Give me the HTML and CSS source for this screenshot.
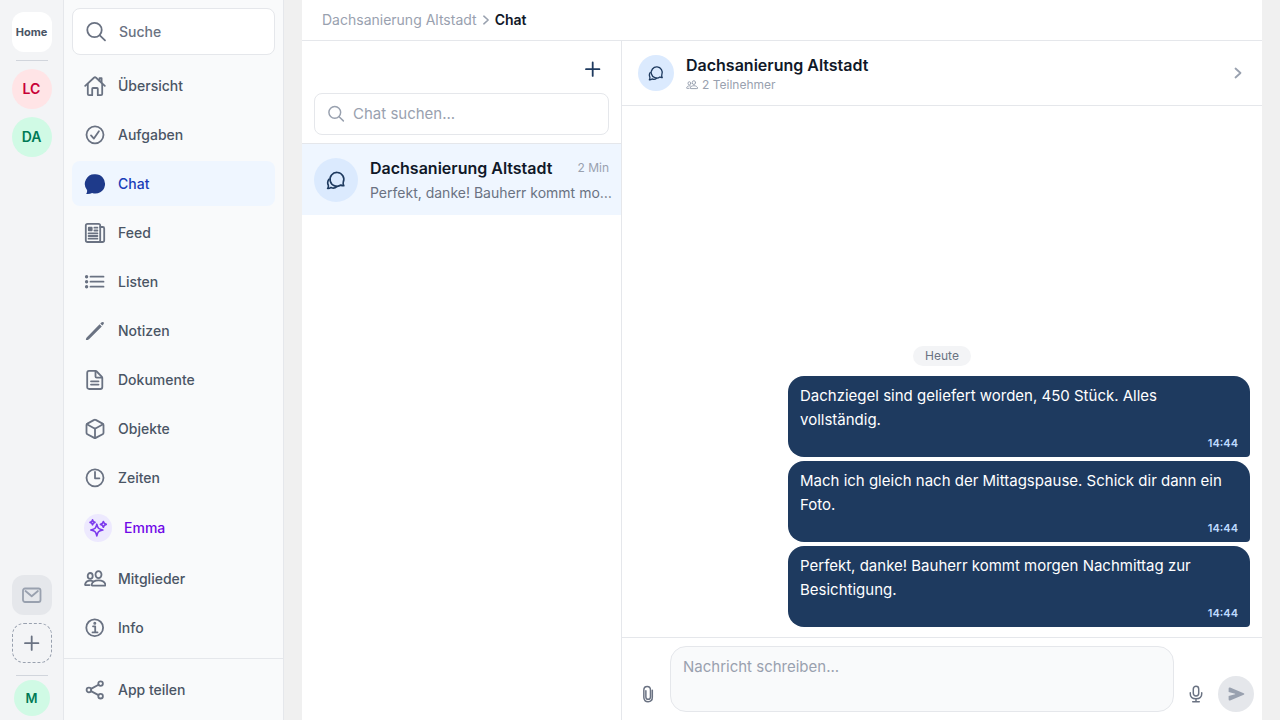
FILE: index.html
```html
<!DOCTYPE html>
<html lang="de">
<head>
<meta charset="utf-8">
<meta name="viewport" content="width=device-width, initial-scale=1">
<title>Dachsanierung Altstadt – Chat</title>
<link rel="stylesheet" href="styles.css">
</head>
<body>
<svg class="sprite" aria-hidden="true">
  <symbol id="i-search" viewBox="0 0 22 22"><circle cx="9.500" cy="9" r="7.200"/><path d="M14.800 14.300 20 19.400"/></symbol>
  <symbol id="i-bubbles" viewBox="0 0 22 22"><path d="M19.600 17.300c-1.200.2-2.300-.1-3.200-.8A7.600 7.600 0 1 1 19 13.300c-.4 1.400-.2 2.800.6 4Z"/><path d="M3.200 10.200c-1.500 2-1.700 4.300-.7 6.400.3 1.200.1 2.600-.7 3.700 1.400.1 2.700-.3 3.700-1.100 1.900.9 4.500.8 6.300-.9"/></symbol>
  <symbol id="i-people" viewBox="0 0 22 22"><ellipse cx="14.500" cy="6.600" rx="3" ry="3.500"/><path d="M8.300 17.600c-.6 0-.8-.4-.7-.9.500-2.600 3.300-4.400 6.900-4.400s6.400 1.800 6.900 4.400c.1.500-.1.900-.7.900Z"/><ellipse cx="6.200" cy="7.900" rx="2.500" ry="2.900"/><path d="M5.500 17.100H1.700c-.5 0-.7-.3-.6-.8.500-2.200 2.500-3.700 5.100-3.700 1 0 2 .2 2.800.6"/></symbol>
  <symbol id="i-plus" viewBox="0 0 22 22"><path d="M10.700 4.500v13.400M4 11.200h13.400"/></symbol>
  <symbol id="i-chevron" viewBox="0 0 10 14"><path d="m2.500 2.500 5 4.500-5 4.500"/></symbol>
</svg>
<div class="app">
  <nav class="rail" aria-label="Projekte">
    <button class="tile home">Home</button>
    <hr class="rail-line">
    <button class="tile round rose">LC</button>
    <button class="tile round mint">DA</button>
    <div class="rail-bottom">
      <button class="tile mail" aria-label="Einladungen"><svg class="icon" viewBox="0 0 22 22"><rect x="2" y="4.500" width="17.500" height="13.500" rx="2"/><path d="m4.500 7 6.200 5.300L16.900 7"/></svg></button>
      <button class="tile add" aria-label="Projekt hinzufügen"><svg class="icon"><use href="#i-plus"/></svg></button>
      <hr class="rail-line">
      <button class="tile round mint me">M</button>
    </div>
  </nav>

  <aside class="sidebar">
    <div class="menu">
      <button class="side-search"><svg class="icon"><use href="#i-search"/></svg>Suche</button>
      <nav class="links" aria-label="Bereiche">
        <a class="link" href="#"><svg class="icon" viewBox="0 0 22 22"><path d="M1.200 10.800 10.200 2.500c.5-.5 1.100-.5 1.600 0l9 8.300"/><path d="M3.800 9v10c0 .8.400 1.200 1.200 1.200h3.200v-6.400c0-.5.300-.8.800-.8h4c.5 0 .8.300.8.800v6.400H17c.8 0 1.200-.4 1.200-1.200V9"/><path d="M15.500 5.800V3.200h2.100v4.600"/></svg>Übersicht</a>
        <a class="link" href="#"><svg class="icon" viewBox="0 0 22 22"><circle cx="11" cy="10.800" r="8.500"/><path d="m7 11.400 2.900 3.200 5-7.300"/></svg>Aufgaben</a>
        <a class="link active" href="#" aria-current="page"><svg class="icon solid" viewBox="0 0 22 22"><path d="M11.200 1.300a9.600 9.600 0 1 1-3.100 18.600c-1.600.9-3.700 1.300-5.900 1 .8-1.100 1.200-2.500.8-4A9.600 9.600 0 0 1 11.200 1.300Z"/></svg>Chat</a>
        <a class="link" href="#"><svg class="icon" viewBox="0 0 22 22"><rect x="1.800" y="1.800" width="14.400" height="18.200" rx="1.800"/><path d="M16.200 5h2.500c1 0 1.500.5 1.500 1.500v11.700c0 1.200-.7 1.800-1.800 1.800H14.500M4.600 11.400h8.800M4.600 14h8.800M4.600 16.700h8.800M10.400 5.700h3M10.400 8.500h3"/><path class="filled" d="M4.800 5.700h2.900v2.600H4.800z"/></svg>Feed</a>
        <a class="link" href="#"><svg class="icon" viewBox="0 0 22 22"><path d="M6.500 5.700h13M6.500 10.700h13M6.500 15.700h13"/><g class="filled"><circle cx="2.600" cy="5.700" r=".8"/><circle cx="2.600" cy="10.700" r=".8"/><circle cx="2.600" cy="15.700" r=".8"/></g></svg>Listen</a>
        <a class="link" href="#"><svg class="icon solid" viewBox="0 0 22 22"><path d="M2 19.900c-.3-.4 0-1.400.7-2.400L15.600 4.300l2.200 2.200L5 19.200c-1.100.8-2.700 1.100-3 .7ZM16.300 3.600l1-1c.8-.8 1.600-.9 2.200-.3s.6 1.400-.2 2.200l-1 1Z"/></svg>Notizen</a>
        <a class="link" href="#"><svg class="icon" viewBox="0 0 22 22"><path d="M5 1.900h6.300c.6 0 1 .2 1.400.6l5 5.100c.4.400.6.900.6 1.500v8.900c0 1.300-.7 2-2 2H5.200c-1.300 0-2-.7-2-2V3.900c0-1.300.6-2 1.800-2Z"/><path d="M11.500 2v5.500c0 .8.400 1.200 1.200 1.200h5.500M7 12.300h7.500M7 15.600h7.500"/></svg>Dokumente</a>
        <a class="link" href="#"><svg class="icon" viewBox="0 0 22 22"><path d="M10.200 1.900c.5-.3 1-.3 1.500 0l6.900 3.700c.6.300.9.800.9 1.500v7.600c0 .7-.3 1.200-.9 1.500l-6.900 3.700c-.5.300-1 .3-1.500 0l-6.800-3.700c-.6-.3-.9-.8-.9-1.500V7.100c0-.7.300-1.200.9-1.500Z"/><path d="M2.900 6.300 11 10.700l8.100-4.400M11 10.700V20"/></svg>Objekte</a>
        <a class="link" href="#"><svg class="icon" viewBox="0 0 22 22"><circle cx="11" cy="10.800" r="8.500"/><path d="M11 4.900v6.400h4.400"/></svg>Zeiten</a>
        <a class="link emma" href="#"><span class="emma-badge"><svg class="icon" viewBox="0 0 22 22"><path d="M9.700 6.800c.9 4.500 1.900 5.400 6.600 6.400-4.700 1-5.700 2-6.600 6.500-.9-4.500-1.900-5.500-6.600-6.500 4.700-1 5.700-1.900 6.600-6.400Z"/><path d="M16.900 3.800c.4 2.200 1 2.700 3.200 3.200-2.200.5-2.800 1-3.200 3.200-.4-2.200-1-2.700-3.200-3.200 2.200-.5 2.800-1 3.200-3.200ZM5 2c.4 1.800.9 2.400 2.700 2.800C5.900 5.200 5.400 5.700 5 7.500 4.600 5.700 4.100 5.200 2.300 4.800 4.100 4.400 4.600 3.800 5 2Z"/></svg></span>Emma</a>
        <a class="link" href="#"><svg class="icon"><use href="#i-people"/></svg>Mitglieder</a>
        <a class="link" href="#"><svg class="icon" viewBox="0 0 22 22"><circle cx="10.700" cy="10.700" r="8.400"/><path d="M9 9.300h2.200v6M8.500 15.400h5"/><circle class="filled" cx="10.800" cy="6.300" r=".6"/></svg>Info</a>
      </nav>
    </div>
    <div class="share">
      <a class="link" href="#"><svg class="icon" viewBox="0 0 22 22"><circle cx="4.900" cy="11" r="2.300"/><circle cx="16.600" cy="4.600" r="2.300"/><circle cx="16.600" cy="17.200" r="2.300"/><path d="m7 9.900 7.500-4.100M7 12.100l7.500 4"/></svg>App teilen</a>
    </div>
  </aside>

  <main class="page">
    <nav class="crumbs" aria-label="Pfad"><a href="#">Dachsanierung Altstadt</a><svg class="icon crumb-sep"><use href="#i-chevron"/></svg><span class="crumb-here" aria-current="page">Chat</span></nav>
    <div class="columns">
      <section class="chats" aria-label="Chats">
        <div class="chats-head">
          <button class="new-chat" aria-label="Neuer Chat"><svg class="icon"><use href="#i-plus"/></svg></button>
          <label class="chat-search"><svg class="icon"><use href="#i-search"/></svg><input type="search" placeholder="Chat suchen..." aria-label="Chat suchen"></label>
        </div>
        <a class="chat-row" href="#">
          <span class="avatar large"><svg class="icon"><use href="#i-bubbles"/></svg></span>
          <span class="chat-text">
            <span class="chat-line"><span class="chat-name">Dachsanierung Altstadt</span><time class="chat-when">2 Min</time></span>
            <span class="chat-preview">Perfekt, danke! Bauherr kommt mo…</span>
          </span>
        </a>
      </section>

      <section class="thread" aria-label="Unterhaltung">
        <header class="thread-head">
          <span class="avatar"><svg class="icon"><use href="#i-bubbles"/></svg></span>
          <div class="thread-info">
            <h1 class="thread-title">Dachsanierung Altstadt</h1>
            <p class="members"><svg class="icon"><use href="#i-people"/></svg>2 Teilnehmer</p>
          </div>
          <button class="details" aria-label="Details"><svg class="icon"><use href="#i-chevron"/></svg></button>
        </header>
        <div class="messages">
          <span class="day">Heute</span>
          <article class="bubble"><p>Dachziegel sind geliefert worden, 450 Stück. Alles vollständig.</p><time>14:44</time></article>
          <article class="bubble"><p>Mach ich gleich nach der Mittagspause. Schick dir dann ein Foto.</p><time>14:44</time></article>
          <article class="bubble"><p>Perfekt, danke! Bauherr kommt morgen Nachmittag zur Besichtigung.</p><time>14:44</time></article>
        </div>
        <form class="composer">
          <button type="button" class="tool" aria-label="Datei anhängen"><svg class="icon" viewBox="0 0 22 22"><path d="M16.300 6.500v8.600c0 3.500-2.100 5.400-5.200 5.400s-5.200-1.900-5.200-5.400V6.200c0-2.700 1.600-4.500 4.100-4.500s4 1.700 4 4.400v8.500c0 1.800-1.100 2.900-2.800 2.900s-2.800-1.100-2.800-2.900V7"/></svg></button>
          <textarea rows="1" placeholder="Nachricht schreiben..." aria-label="Nachricht"></textarea>
          <button type="button" class="tool" aria-label="Sprachnachricht"><svg class="icon" viewBox="0 0 22 22"><rect x="7.700" y="1.500" width="6.600" height="12" rx="3.300"/><path d="M4 9.500v1.200c0 3.800 2.700 6.200 7 6.200s7-2.400 7-6.200V9.500M11 17v3.500M7 20.500h8"/></svg></button>
          <button type="button" class="tool send" aria-label="Senden"><svg class="icon solid" viewBox="0 0 22 22"><path d="M2 4.300c0-1 .8-1.500 1.800-1.100L20.400 10c1 .5 1 1.500 0 2L3.800 18.900c-1 .4-1.800-.1-1.800-1.100v-4.400l8-2v-.8L2 8.700Z"/></svg></button>
        </form>
      </section>
    </div>
  </main>
</div>
</body>
</html>
```
FILE: styles.css
```css
*, *::before, *::after { box-sizing: border-box; }

body {
  margin: 0;
  background: #f0f0f0;
  color: #101828;
  font-family: Inter, "Liberation Sans", sans-serif;
  font-size: 14px;
  line-height: 20px;
}

button, input, textarea { font: inherit; color: inherit; }
button { margin: 0; padding: 0; border: 0; background: none; cursor: pointer; }
a { color: inherit; text-decoration: none; }
h1, p { margin: 0; }

.sprite { position: absolute; width: 0; height: 0; }

.icon {
  flex: none;
  width: 22px;
  height: 22px;
  fill: none;
  stroke: currentColor;
  stroke-width: 1.8;
  stroke-linecap: round;
  stroke-linejoin: round;
}
.icon.solid, .icon .filled { fill: currentColor; }
.icon.solid { stroke: none; }

.app { display: flex; height: 100vh; }

/* Project rail */
.rail {
  flex: none;
  display: flex;
  flex-direction: column;
  align-items: center;
  gap: 8px;
  width: 64px;
  padding: 12px 0 4px;
  border-right: 1px solid #e5e7eb;
  background: #f3f4f6;
}
.rail-line { width: 32px; height: 1px; margin: 0; border: 0; background: #d1d5dc; }
.tile {
  display: flex;
  align-items: center;
  justify-content: center;
  width: 40px;
  height: 40px;
  border-radius: 12px;
  font-weight: 600;
}
.home { background: #fff; color: #4a5565; font-size: 11px; font-weight: 700; }
.round { border-radius: 50%; }
.rose { background: #ffe4e6; color: #c70036; }
.mint { background: #d0fae5; color: #007a55; }
.rail-bottom { display: flex; flex-direction: column; align-items: center; gap: 8px; margin-top: auto; }
.rail-bottom .rail-line { margin: 4px 0 -4px; }
.mail { background: #e5e7eb; color: #99a1af; }
.add { border: 1px dashed #99a1af; color: #6a7282; }
.me { width: 36px; height: 36px; font-size: 13px; }

/* Sidebar */
.sidebar {
  flex: none;
  display: flex;
  flex-direction: column;
  width: 220px;
  border-right: 1px solid #e5e7eb;
  background: #f9fafb;
}
.menu { flex: 1; min-height: 0; overflow: hidden; padding: 8px; }
.side-search {
  display: flex;
  align-items: center;
  gap: 12px;
  width: 100%;
  height: 47px;
  padding: 0 12px;
  border: 1px solid #e5e7eb;
  border-radius: 8px;
  background: #fff;
  color: #6a7282;
  font-weight: 500;
}
.links { display: flex; flex-direction: column; gap: 4px; margin-top: 8px; }
.link {
  display: flex;
  align-items: center;
  gap: 12px;
  min-height: 45px;
  padding: 0 12px;
  border-radius: 8px;
  color: #4a5565;
  font-weight: 500;
}
.link .icon { color: #6a7282; }
.link.active { background: #eff6ff; color: #193cb8; }
.link.active .icon { color: #1e3a8a; }
.link.emma { min-height: 48px; color: #7008e7; }
.emma-badge {
  display: flex;
  align-items: center;
  justify-content: center;
  width: 28px;
  height: 28px;
  border-radius: 50%;
  background: #ede9fe;
}
.emma-badge .icon { width: 20px; height: 20px; color: #7c3aed; }
.share { padding: 8px; border-top: 1px solid #e5e7eb; }

/* Page */
.page {
  flex: 1;
  display: flex;
  flex-direction: column;
  min-width: 0;
  max-width: 960px;
  margin: 0 auto;
  background: #fff;
}
.crumbs {
  display: flex;
  align-items: center;
  gap: 4px;
  padding: 10px 20px;
  border-bottom: 1px solid #e5e7eb;
  color: #99a1af;
}
.crumb-sep { width: 10px; height: 12px; }
.crumb-here { color: #101828; font-weight: 600; }
.columns { flex: 1; display: flex; min-height: 0; }

/* Chat list */
.chats { flex: none; width: 320px; border-right: 1px solid #e5e7eb; }
.chats-head {
  display: flex;
  flex-direction: column;
  gap: 8px;
  padding: 12px 12px 8px;
  border-bottom: 1px solid #e5e7eb;
}
.new-chat {
  display: flex;
  align-items: center;
  justify-content: center;
  align-self: flex-end;
  width: 32px;
  height: 32px;
  color: #1e3a5f;
}
.chat-search {
  display: flex;
  align-items: center;
  gap: 8px;
  height: 42px;
  padding: 0 12px;
  border: 1px solid #e5e7eb;
  border-radius: 8px;
  color: #99a1af;
}
.chat-search .icon { width: 18px; height: 18px; }
.chat-search input {
  flex: 1;
  min-width: 0;
  padding: 0;
  border: 0;
  outline: 0;
  background: none;
  color: #101828;
  font-size: 15px;
}
::placeholder { color: #99a1af; opacity: 1; }
.chat-row {
  display: flex;
  align-items: center;
  gap: 12px;
  padding: 12px;
  background: #eff6ff;
}
.avatar {
  flex: none;
  display: flex;
  align-items: center;
  justify-content: center;
  width: 36px;
  height: 36px;
  border-radius: 50%;
  background: #dbeafe;
  color: #1e3a5f;
}
.avatar .icon { width: 16px; height: 16px; }
.avatar.large { width: 44px; height: 44px; }
.avatar.large .icon { width: 20px; height: 20px; }
.chat-text { flex: 1; display: flex; flex-direction: column; gap: 3px; min-width: 0; }
.chat-line { display: flex; align-items: center; justify-content: space-between; gap: 8px; }
.chat-name { font-size: 16px; font-weight: 600; line-height: 24px; }
.chat-when { color: #99a1af; font-size: 12px; }
.chat-preview { color: #6a7282; white-space: nowrap; }

/* Conversation */
.thread { flex: 1; display: flex; flex-direction: column; min-width: 0; }
.thread-head {
  display: flex;
  align-items: center;
  gap: 12px;
  padding: 12px 16px;
  border-bottom: 1px solid #e5e7eb;
}
.thread-info { flex: 1; min-width: 0; }
.thread-title { font-size: 16px; font-weight: 600; line-height: 24px; }
.members { display: flex; align-items: center; gap: 4px; color: #99a1af; font-size: 12px; line-height: 16px; }
.members .icon { width: 12px; height: 12px; }
.details { display: flex; color: #99a1af; }
.details .icon { width: 16px; height: 14px; }
.messages {
  flex: 1;
  display: flex;
  flex-direction: column;
  align-items: flex-end;
  justify-content: flex-end;
  gap: 4px;
  min-height: 0;
  padding: 10px 12px;
}
.day {
  align-self: center;
  margin-bottom: 6px;
  padding: 2px 12px;
  border-radius: 10px;
  background: #f3f4f6;
  color: #6a7282;
  font-size: 12px;
  line-height: 16px;
}
.bubble {
  display: flex;
  flex-direction: column;
  width: 75%;
  padding: 8px 12px;
  border-radius: 16px 16px 4px 16px;
  background: #1e3a5f;
  color: #fff;
  font-size: 15px;
  line-height: 24px;
}
.bubble time {
  align-self: flex-end;
  padding-top: 5px;
  color: #bedbff;
  font-size: 11px;
  font-weight: 600;
  line-height: 12px;
}
.composer {
  display: flex;
  align-items: flex-end;
  gap: 4px;
  padding: 8px;
  border-top: 1px solid #e5e7eb;
}
.composer textarea {
  flex: 1;
  min-width: 0;
  height: 66px;
  padding: 8px 12px;
  border: 1px solid #e5e7eb;
  border-radius: 16px;
  outline: 0;
  background: #f9fafb;
  color: #101828;
  font-size: 15px;
  line-height: 24px;
  resize: none;
}
.tool {
  display: flex;
  align-items: center;
  justify-content: center;
  width: 36px;
  height: 36px;
  border-radius: 50%;
  color: #6a7282;
}
.tool .icon { width: 18px; height: 18px; }
.send { background: #e5e7eb; color: #99a1af; }
```
